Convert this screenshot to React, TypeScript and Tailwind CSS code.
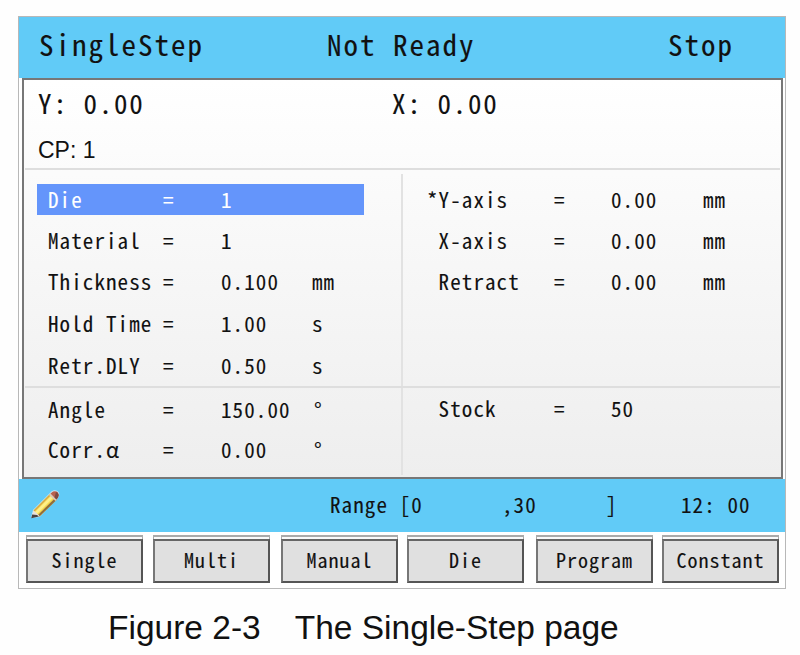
import React from "react";

const leftRows = [
  { label: "Die", value: "1", unit: "", height: "h-[41px]", active: true },
  { label: "Material", value: "1", unit: "", height: "h-[41px]" },
  { label: "Thickness", value: "0.100", unit: "mm", height: "h-[42px]" },
  { label: "Hold Time", value: "1.00", unit: "s", height: "h-[42px]" },
  { label: "Retr.DLY", value: "0.50", unit: "s", height: "h-[42px]" },
];

const angleRows = [
  { label: "Angle", value: "150.00", unit: "°", height: "h-[40px]" },
  { label: "Corr.α", value: "0.00", unit: "°", height: "h-[40px]" },
];

const rightRows = [
  { label: "*Y-axis", value: "0.00", unit: "mm", height: "h-[41px]" },
  { label: " X-axis", value: "0.00", unit: "mm", height: "h-[41px]" },
  { label: " Retract", value: "0.00", unit: "mm", height: "h-[42px]" },
];

const stockRows = [
  { label: " Stock", value: "50", unit: "", height: "h-[40px]" },
];

const buttons = [
  { name: "Single", gap: "mr-[10px]" },
  { name: "Multi", gap: "mr-[11px]" },
  { name: "Manual", gap: "mr-[9px]" },
  { name: "Die", gap: "mr-[12px]" },
  { name: "Program", gap: "mr-[9px]" },
  { name: "Constant", gap: "" },
];

type Row = {
  label: string;
  value: string;
  unit: string;
  height: string;
  active?: boolean;
};

const LeftRow = ({ row }: { row: Row }) => (
  <div className={`flex items-center ${row.height}`}>
    <div
      className={`flex h-[31px] w-[327px] items-center pb-[1px] pl-[11px] ${
        row.active ? "bg-[#6495fb] text-white" : ""
      }`}
    >
      <span className="w-[115px]">{row.label}</span>
      <span className="w-[58px]">=</span>
      <span className="w-[91px]">{row.value}</span>
      <span className={row.unit === "°" ? "pb-[1px] pl-[2px]" : ""}>
        {row.unit}
      </span>
    </div>
  </div>
);

const RightRow = ({ row }: { row: Row }) => (
  <div className={`flex items-center pb-[1px] ${row.height}`}>
    <span className="w-[127px]">{row.label}</span>
    <span className="w-[57px]">=</span>
    <span className="w-[92px]">{row.value}</span>
    <span>{row.unit}</span>
  </div>
);

const Pencil = () => (
  <svg width="32" height="32" viewBox="0 0 32 32">
    <path d="M2 29 L4 21 L22.500 2.500 Q26.500 0 29.500 3 Q31.500 6 28.500 9.500 L10.500 28 Z" fill="#eef3f5" opacity="0.75" />
    <path d="M4.500 21.500 L21 5 L27.500 11 L10.500 27.500 Z" fill="#f4d84f" />
    <path d="M4.500 21.500 L21 5 L22 6 L5.500 22.500 Z" fill="#d3a84a" />
    <path d="M6 23 L22.500 6.500 L24.500 8.500 L8 25 Z" fill="#fff08a" />
    <path d="M9 26 L25.700 9.500 L27.500 11 L10.500 27.500 Z" fill="#8f6d3d" />
    <path d="M20 6 L22 4 L28.500 10 L26.500 12 Z" fill="#d9c9b8" />
    <path d="M21.500 4.500 L24 2.500 Q27 1.500 29 3.500 Q30.500 6 29 8.500 L27.500 10.500 Z" fill="#b9604d" />
    <path d="M27 3 Q31 4.500 29 8.500 L27.500 10.500 L25.500 8.500 Z" fill="#7d4a42" />
    <path d="M4.500 21.500 L2.500 28.500 L10.500 27 Z" fill="#e9e2da" />
    <path d="M3.200 25.500 L2.200 29.200 L10 27.500 L8 26 Z" fill="#4a4240" />
  </svg>
);

export default function App() {
  return (
    <div className="h-[655px] w-[800px] overflow-hidden bg-[#fefefe] pt-[16px] pl-[18px] font-['Noto_Sans_CJK_SC',sans-serif] text-[#111]">
      <div className="h-[573px] w-[768px] border border-[#b8b8b8] bg-white text-[21px] leading-none tracking-[1.1px] whitespace-pre [-webkit-text-stroke:0.1px] [font-feature-settings:'hwid']">
        <div className="flex h-[61px] items-center bg-[#61cbf7] pb-[8px] pl-[20px] text-[29px] tracking-[2px]">
          <span className="w-[288px]">SingleStep</span>
          <span className="w-[341px]">Not Ready</span>
          <span>Stop</span>
        </div>

        <div className="ml-[3px] flex h-[401px] w-[761px] flex-col border-2 border-[#777] bg-linear-to-b from-white to-[#eeeeee] px-[1px]">
          <div className="h-[90px] border-b-2 border-[#dedede] pl-[13px]">
            <div className="flex h-[50px] items-center pb-[6px] text-[27px] tracking-[1.7px]">
              <span className="w-[354px]">Y: 0.00</span>
              <span>X: 0.00</span>
            </div>
            <div className="flex h-[40px] items-center font-['Liberation_Sans',sans-serif] text-[23px] tracking-normal [-webkit-text-stroke:0px]">
              CP: 1
            </div>
          </div>

          <div className="flex h-[218px] border-b-2 border-[#dedede] pt-[4px]">
            <div className="w-[376px] pt-[5px] pl-[12px]">
              {leftRows.map((row, index) => (
                <LeftRow key={index} row={row} />
              ))}
            </div>
            <div className="w-[376px] border-l-2 border-[#e2e2e2] pt-[5px] pl-[24px]">
              {rightRows.map((row, index) => (
                <RightRow key={index} row={row} />
              ))}
            </div>
          </div>

          <div className="flex h-[87px]">
            <div className="w-[376px] pt-[2px] pl-[12px]">
              {angleRows.map((row, index) => (
                <LeftRow key={index} row={row} />
              ))}
            </div>
            <div className="w-[376px] border-l-2 border-[#e2e2e2] pt-[1px] pl-[24px]">
              {stockRows.map((row, index) => (
                <RightRow key={index} row={row} />
              ))}
            </div>
          </div>
        </div>

        <div className="flex h-[53px] items-center bg-[#61cbf7] pb-[3px] pl-[10px]">
          <div className="w-[301px] pt-[2px]">
            <Pencil />
          </div>
          <span className="w-[172px]">Range [0</span>
          <span className="w-[104px]">,30</span>
          <span className="w-[75px]">]</span>
          <span>12: 00</span>
        </div>

        <div className="flex pt-[3px] pl-[7px]">
          {buttons.map((button) => (
            <div
              key={button.name}
              className={`h-[48px] w-[117px] border-t-2 border-r border-l border-[#aaa] bg-[#fafafa] pt-[2px] ${button.gap}`}
            >
              <button className="-ml-px flex h-[44px] w-[117px] items-center justify-center border-2 border-l-[#777] border-t-[#666] border-r-[#555] border-b-[#555] bg-[#e0e0e0] pb-[3px] text-[20px] tracking-[1px]">
                {button.name}
              </button>
            </div>
          ))}
        </div>
      </div>

      <p className="mt-[19px] ml-[90px] font-['Liberation_Sans',sans-serif] text-[33.5px] leading-[40px] text-[#111]">
        <span className="mr-[34px]">Figure 2-3</span>
        <span>The Single-Step page</span>
      </p>
    </div>
  );
}
